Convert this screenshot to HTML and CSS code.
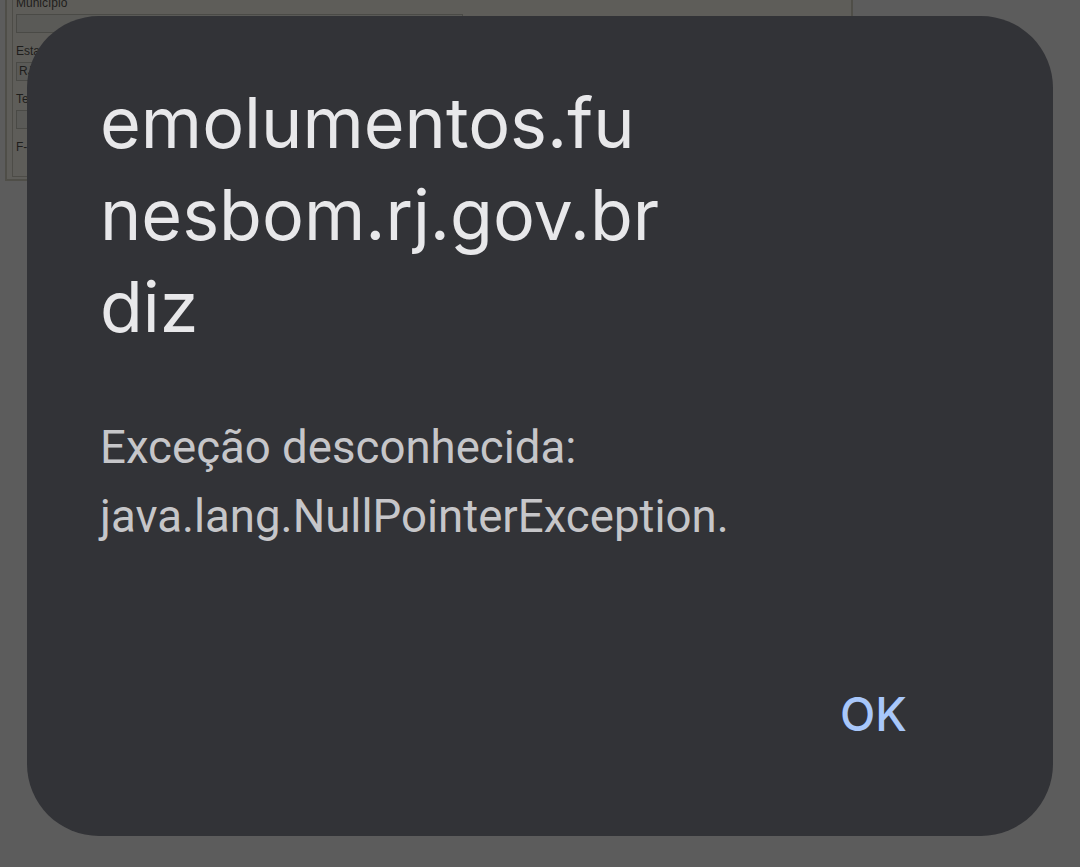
FILE: index.html
```html
<!DOCTYPE html>
<html lang="pt-BR">
<head>
<meta charset="utf-8">
<title>Alerta</title>
<link rel="stylesheet" href="styles.css">
</head>
<body>
<div class="page">
  <div class="panel">
    <div class="fieldset">
      <div class="label">Município</div>
      <div class="input wide"></div>
      <div class="label">Estado</div>
      <div class="input select">RJ</div>
      <div class="label">Telefone</div>
      <div class="input short"></div>
      <div class="label">F-mail</div>
    </div>
  </div>
</div>
<div class="dialog" role="alertdialog">
  <h1 class="title">emolumentos.fu<br>nesbom.rj.gov.br<br>diz</h1>
  <p class="message">Exceção desconhecida:<br>java.lang.NullPointerException.</p>
  <div class="actions">
    <button class="ok">OK</button>
  </div>
</div>
</body>
</html>
```

FILE: styles.css
```css
html, body {
  margin: 0;
  padding: 0;
  width: 1080px;
  height: 867px;
  overflow: hidden;
  background: #5c5c5c;
}

.page {
  padding-left: 5px;
}

.panel {
  width: 848px;
  height: 185px;
  margin-top: -4px;
  border: 2px solid #4f4e48;
  border-top: none;
  background: #5e5d59;
  padding: 0 0 0 5px;
  box-sizing: border-box;
}

.fieldset {
  height: 181px;
  border-left: 1px solid #4d4c47;
  border-bottom: 1px solid #4d4c47;
  padding: 0 0 0 3px;
  box-sizing: border-box;
  font-family: "Liberation Sans", Arial, sans-serif;
  font-size: 12px;
  color: #1e1e1c;
}

.label {
  height: 14px;
  line-height: 14px;
  margin-bottom: 4px;
}

.input {
  height: 19px;
  border: 1px solid #4a4a46;
  background: #5a5a57;
  margin: 0 0 11px 0;
  box-sizing: border-box;
  line-height: 17px;
  padding-left: 2px;
}

.wide { width: 447px; }
.select { width: 110px; }
.short { width: 110px; }

.dialog {
  position: absolute;
  left: 27px;
  top: 16px;
  width: 1026px;
  height: 820px;
  box-sizing: border-box;
  border-radius: 72px;
  background: #323337;
  padding: 61px 73px 0 73px;
  display: flex;
  flex-direction: column;
}

.title {
  margin: 0;
  font-family: Inter, "Noto Sans", sans-serif;
  font-weight: 400;
  font-size: 70px;
  line-height: 92px;
  color: #e8e8ea;
}

.message {
  margin: 60px 0 0 0;
  font-family: Roboto, "Noto Sans", sans-serif;
  font-size: 45.6px;
  line-height: 69px;
  color: #c6c6c9;
}

.actions {
  margin-top: 135px;
  display: flex;
  justify-content: flex-end;
  padding-right: 73px;
}

.ok {
  background: none;
  border: none;
  padding: 0;
  font-family: Inter, "Noto Sans", sans-serif;
  font-weight: 500;
  font-size: 46px;
  line-height: 56px;
  color: #a8c7fa;
}
```
